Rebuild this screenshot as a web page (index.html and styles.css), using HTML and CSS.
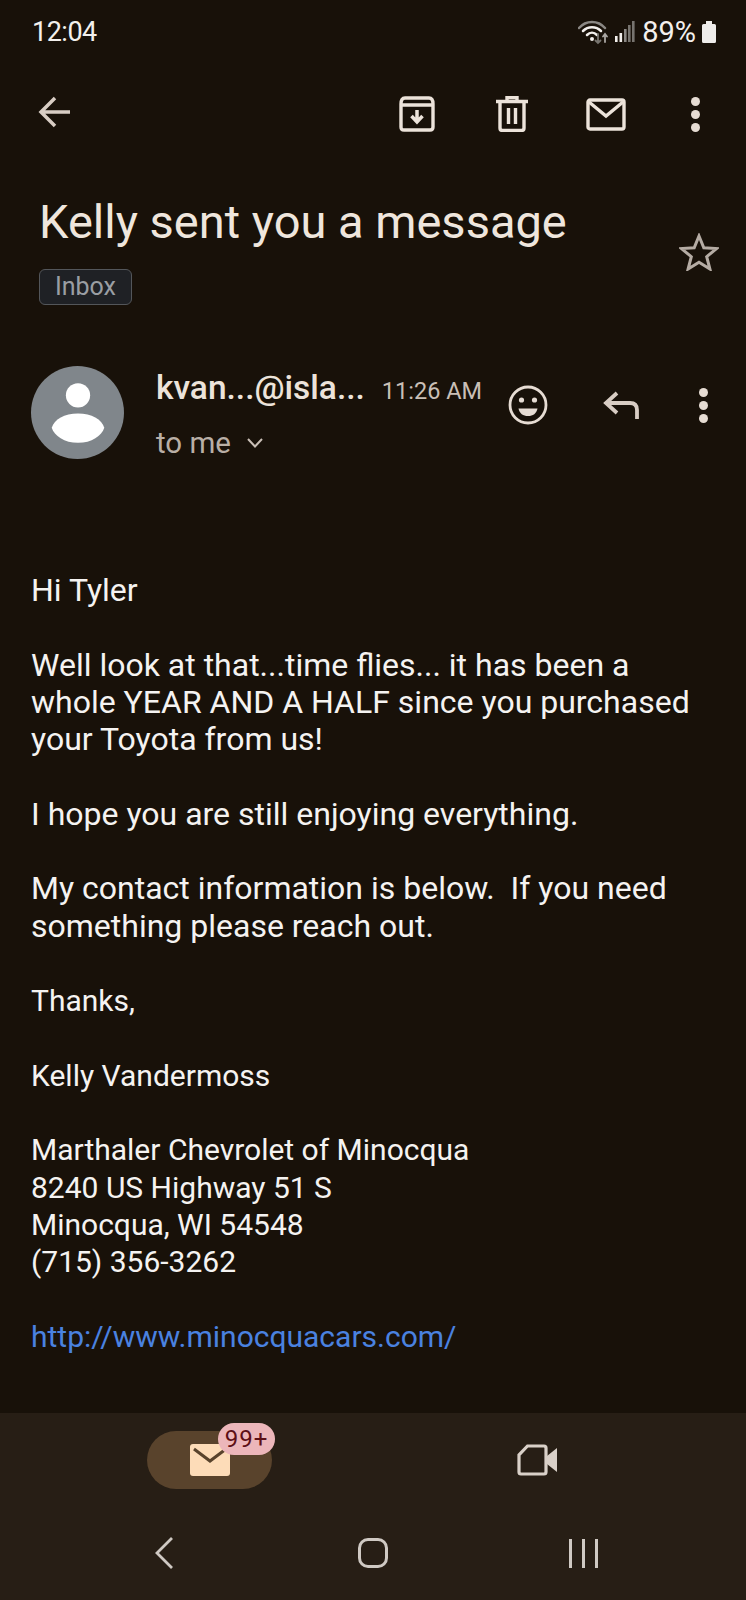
FILE: index.html
```html
<!DOCTYPE html>
<html lang="en">
<head>
    <meta charset="UTF-8">
    <title>Kelly sent you a message</title>
    <link rel="stylesheet" href="styles.css">
</head>
<body>
    <div class="phone">
        <div class="status_bar">
            <span class="clock">12:04</span>
            <div class="status_right">
                <svg class="ic_wifi" width="30" height="26" viewBox="0 0 30 26" fill="none" stroke-linecap="round">
                    <path d="M1 9C8 1 20 1 27 9" stroke="#8a8783" stroke-width="2.5"/>
                    <path d="M5 12C10 7 18 7 23 12" stroke="#f2efec" stroke-width="2.5"/>
                    <path d="M9 16C12 13 16 13 19 16" stroke="#f2efec" stroke-width="2.5"/>
                    <circle cx="14" cy="20" r="2" fill="#f2efec"/>
                    <path d="M20 15V24M17.500 21.500L20 24L22.500 21.500" stroke="#77746f" stroke-width="1.800"/>
                    <path d="M27 23V15M25 17.500L27 15L29 17.500" stroke="#a9a6a2" stroke-width="1.800"/>
                </svg>
                <svg class="ic_signal" width="20" height="22" viewBox="0 0 20 22">
                    <rect x="0" y="15" width="2.600" height="6" fill="#f2efec"/>
                    <rect x="4.500" y="12" width="2.600" height="9" fill="#f2efec"/>
                    <rect x="9" y="8" width="2.600" height="13" fill="#8a8783"/>
                    <rect x="13" y="4" width="2.600" height="17" fill="#77746f"/>
                    <rect x="17" y="0" width="2.600" height="21" fill="#77746f"/>
                </svg>
                <span class="battery_txt">89%</span>
                <svg class="ic_battery" width="14" height="22" viewBox="0 0 14 22">
                    <path d="M4 0H10V3H12.500Q14 3 14 4.500V20.500Q14 22 12.500 22H1.500Q0 22 0 20.500V4.500Q0 3 1.500 3H4Z" fill="#efedeb"/>
                </svg>
            </div>
        </div>

        <div class="toolbar">
            <svg class="ic_back" width="32" height="32" viewBox="0 0 32 32" fill="none" stroke="#d8cdc4" stroke-width="3.500">
                <path d="M32 16H3M17 2L3 16L17 30"/>
            </svg>
            <div class="toolbar_actions">
                <svg width="36" height="36" viewBox="0 0 36 36" fill="none" stroke="#ece3da" stroke-width="3.400">
                    <path d="M2 8Q2 2 6 2H30Q34 2 34 8V31Q34 34 31 34H5Q2 34 2 31ZM2 9H34"/>
                    <path d="M18 14V25M12.500 20L18 26L23.500 20" stroke-width="3.500"/>
                </svg>
                <svg width="32" height="36" viewBox="0 0 32 36" fill="none" stroke="#ece3da" stroke-width="3.400">
                    <path d="M0 5.500H32M11 5V1.500H21V5"/>
                    <path d="M4 6V32Q4 34.500 6.500 34.500H25.500Q28 34.500 28 32V6"/>
                    <path d="M12.500 12V28M19.500 12V28"/>
                </svg>
                <svg width="40" height="33" viewBox="0 0 40 33" fill="none" stroke="#ece3da" stroke-width="3.400">
                    <rect x="2" y="2" width="36" height="29" rx="2"/>
                    <path d="M3 4L20 18L37 4"/>
                </svg>
                <div class="dots dots_big"><i></i><i></i><i></i></div>
            </div>
        </div>

        <div class="subject">
            <div class="subject_left">
                <h1>Kelly sent you a message</h1>
                <span class="chip">Inbox</span>
            </div>
            <svg class="ic_star" width="40" height="38" viewBox="0 0 40 38" fill="none" stroke="#b5aca4" stroke-width="3">
                <path d="M20 3L24.800 14.800L37.500 15.600L27.700 23.700L30.900 36L20 29.200L9.100 36L12.300 23.700L2.500 15.600L15.200 14.800Z"/>
            </svg>
        </div>

        <div class="sender_row">
            <div class="avatar">
                <svg width="93" height="93" viewBox="0 0 92 92" fill="#fff">
                    <ellipse cx="46.500" cy="29" rx="12" ry="12"/>
                    <path d="M46.500 47C60 47 70 53 72.500 61C70 69 60 76 46.500 76C33 76 23 69 20.500 61C23 53 33 47 46.500 47Z"/>
                </svg>
            </div>
            <div class="sender_info">
                <div class="sender_top">
                    <span class="sender_name">kvan...@isla...</span>
                    <span class="sender_time">11:26 AM</span>
                </div>
                <div class="sender_to">
                    <span>to me</span>
                    <svg width="16" height="10" viewBox="0 0 16 10" fill="none" stroke="#c9bfb6" stroke-width="2">
                        <path d="M1 1L8 8.500L15 1"/>
                    </svg>
                </div>
            </div>
            <div class="sender_actions">
                <svg width="40" height="40" viewBox="0 0 40 40" fill="none" stroke="#e6dcd3" stroke-width="2.800">
                    <circle cx="20" cy="20" r="18"/>
                    <circle cx="13.500" cy="15" r="2.600" fill="#e6dcd3" stroke="none"/>
                    <circle cx="26.500" cy="15" r="2.600" fill="#e6dcd3" stroke="none"/>
                    <path d="M10.500 23.500H29.500C28.500 28.500 25 31 20 31C15 31 11.500 28.500 10.500 23.500Z" fill="#e6dcd3" stroke="none"/>
                </svg>
                <svg width="36" height="28" viewBox="0 0 36 28" fill="none" stroke="#d8cdc4" stroke-width="3.800">
                    <path d="M14 2L3 12L14 22M3 12H27Q34 12 34 19V28"/>
                </svg>
                <div class="dots"><i></i><i></i><i></i></div>
            </div>
        </div>

        <div class="mail_body">
            <div class="intro">
                <p>Hi Tyler</p>
                <p>Well look at that...time flies... it has been a whole YEAR AND A HALF since you purchased your Toyota from us!</p>
                <p>I hope you are still enjoying everything.</p>
                <p>My contact information is below.&nbsp; If you need something please reach out.</p>
            </div>
            <p>Thanks,</p>
            <p>Kelly Vandermoss</p>
            <p>Marthaler Chevrolet of Minocqua<br>8240 US Highway 51 S<br>Minocqua, WI 54548<br>(715) 356-3262</p>
            <p><a href="#">http://www.minocquacars.com/</a></p>
        </div>

        <div class="bottom">
            <div class="tabs">
                <div class="tab_mail">
                    <svg width="40" height="32" viewBox="0 0 40 32">
                        <rect width="40" height="32" rx="3" fill="#fddcb8"/>
                        <path d="M4 5L20 17L36 5" fill="none" stroke="#59432c" stroke-width="3"/>
                    </svg>
                    <span class="badge">99+</span>
                </div>
                <svg class="ic_video" width="40" height="32" viewBox="0 0 40 32">
                    <path d="M10.500 2H27Q29 2 29 4V28Q29 30 27 30H4Q2 30 2 28V11Z" fill="none" stroke="#d9d0c8" stroke-width="3.200"/>
                    <path d="M30 12L40 4V28L30 20Z" fill="#d9d0c8"/>
                </svg>
            </div>
            <div class="navbar">
                <svg width="18" height="32" viewBox="0 0 18 32" fill="none" stroke="#cfc9c3" stroke-width="2.800">
                    <path d="M17 1L2 16L17 31"/>
                </svg>
                <div class="nav_home"></div>
                <div class="nav_recent"><i></i><i></i><i></i></div>
            </div>
        </div>
    </div>
</body>
</html>
```

FILE: styles.css
```css
*{padding:0;margin:0;box-sizing:border-box;}
body{background:#181109;font-family:Roboto,"Liberation Sans",sans-serif;}

.phone{width:746px;height:1600px;display:flex;flex-direction:column;background:#181109;overflow:hidden;}

.status_bar{height:64px;padding:0 30px 0 32px;display:flex;justify-content:space-between;align-items:center;color:#f3f0ed;font-size:27px;}
.clock{letter-spacing:-0.5px;}
.status_right{display:flex;align-items:center;}
.ic_wifi{margin-right:7px;}
.ic_signal{margin-right:7px;}
.battery_txt{margin-right:6px;font-size:29px;}

.toolbar{height:130px;padding:32px 0 0 38px;display:flex;justify-content:space-between;align-items:flex-start;}
.toolbar_actions{display:flex;align-items:center;}
.toolbar_actions svg:nth-child(1){margin-right:61px;}
.toolbar_actions svg:nth-child(2){margin-right:58px;}
.toolbar_actions svg:nth-child(3){margin-right:65px;}
.dots{display:flex;flex-direction:column;gap:4px;margin-right:37px;}
.dots i{display:block;width:9px;height:9px;border-radius:50%;background:#e6dcd3;}
.dots_big{margin-right:46px;}

.subject{padding:0 27px 0 39px;display:flex;justify-content:space-between;}
h1{font-size:47px;font-weight:400;line-height:60px;color:#efe6dd;margin-top:-2px;}
.chip{display:inline-block;margin-top:17px;width:93px;height:36px;line-height:33px;text-align:center;font-size:25px;color:#9a9ea3;background:#1f2125;border:1px solid #53565a;border-radius:6px;}
.ic_star{margin-top:39px;}

.sender_row{margin-top:61px;padding-left:31px;display:flex;}
.avatar{width:93px;height:93px;border-radius:50%;background:#80868b;}
.sender_info{margin-left:32px;width:341px;}
.sender_top{display:flex;align-items:baseline;gap:17px;margin-top:2px;height:40px;white-space:nowrap;}
.sender_name{font-size:33.500px;font-weight:500;color:#ece3da;}
.sender_time{font-size:23.500px;color:#c9bfb6;}
.sender_to{margin-top:18px;display:flex;align-items:center;gap:16px;font-size:29.500px;color:#b9afa6;}
.sender_actions{flex:1;display:flex;align-items:center;height:78px;}
.sender_actions svg:nth-child(1){margin-left:11px;margin-right:55px;}
.sender_actions svg:nth-child(2){margin-right:60px;}

.mail_body{margin-top:112px;padding:0 31px;flex:1;font-size:30px;line-height:37.300px;color:#f5f3f1;}
.mail_body p{margin-bottom:37.300px;}
.intro{font-size:32px;}
.mail_body a{color:#4a82e0;text-decoration:none;}

.bottom{height:187px;background:#271e15;display:flex;flex-direction:column;}
.tabs{height:106px;padding-top:18px;display:flex;}
.tab_mail{margin-left:147px;width:125px;height:58px;border-radius:29px;background:#59432c;display:flex;justify-content:center;align-items:flex-start;padding-top:13px;position:relative;}
.badge{position:absolute;left:71px;top:-8px;width:57px;height:32px;border-radius:16px;background:#ecb6ba;color:#5d0f16;font-size:24px;letter-spacing:1px;line-height:32px;text-align:center;}
.ic_video{margin-left:245px;margin-top:13px;}

.navbar{padding:18px 148px 0 155px;display:flex;justify-content:space-between;align-items:center;}
.nav_home{width:30px;height:30px;margin-left:4px;border:3px solid #cfc9c3;border-radius:10px;}
.nav_recent{display:flex;gap:10px;}
.nav_recent i{display:block;width:3px;height:29px;background:#cfc9c3;}
```
